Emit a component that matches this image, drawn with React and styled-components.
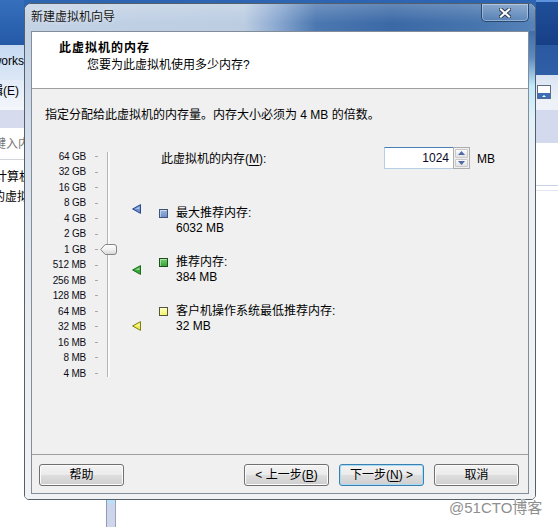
import React from 'react';
import styled, { createGlobalStyle } from 'styled-components';

const FONT = `"Liberation Sans", "Noto Sans CJK SC", sans-serif`;
const ROW = 15.47;

const GlobalStyle = createGlobalStyle`
  html, body { margin: 0; padding: 0; background: #ffffff; }
  body { font-family: ${FONT}; font-size: 12px; color: #000; }
  * { box-sizing: border-box; }
`;

const Desktop = styled.div`
  position: relative;
  width: 558px;
  height: 527px;
  overflow: hidden;
  display: grid;
  grid-template-columns: 24px 512px 22px;
  grid-template-rows: 500px 27px;
  background: #ffffff;
`;

/* ---------- background window, left side ---------- */
const LeftPane = styled.div`
  display: flex;
  flex-direction: column;
  overflow: hidden;
  background: #ffffff;
  white-space: nowrap;
`;
const AeroBand = styled.div`
  flex: none;
  height: 45px;
  background: ${p => (p.$dark ? 'linear-gradient(#1f4f99, #173f86)' : 'linear-gradient(#3670bd, #2459a6)')};
  border-top: ${p => (p.$dark ? '2px solid #5d92dc' : 'none')};
`;
const ToolBand = styled.div`
  flex: none;
  height: 35px;
  display: flex;
  align-items: center;
  justify-content: flex-end;
  padding-bottom: 4px;
  background: linear-gradient(#c5d9f1, #dce8f6);
`;
const MenuBand = styled.div`
  flex: none;
  height: 30px;
  display: flex;
  align-items: flex-start;
  justify-content: flex-end;
  padding: 3px 5px 0 0;
  line-height: 16px;
  background: linear-gradient(#e2ebf7, #f4f7fb);
`;
const NavBand = styled.div`
  flex: none;
  height: 18px;
  background: #d6dced;
`;
const SearchBand = styled.div`
  flex: none;
  height: 32px;
  padding-top: 8px;
  line-height: 16px;
  color: #777;
  border-bottom: 1px solid #d2d6dc;
  text-indent: -6px;
`;
const TreeArea = styled.div`
  flex: 1;
  padding-top: 7px;
`;
const TreeItem = styled.div`
  line-height: 20px;
  text-indent: ${p => p.$indent}px;
`;

/* ---------- background window, right side ---------- */
const RightPane = styled.div`
  display: flex;
  flex-direction: column;
  overflow: hidden;
  background: #ffffff;
`;
const RibbonBand = styled.div`
  flex: none;
  height: 30px;
  background: linear-gradient(#2a58a1, #2f5fa7);
`;
const PanelBand = styled.div`
  flex: none;
  height: 25px;
  padding: 10px 0 0 1px;
  background: linear-gradient(#d9e4f1, #ecf1f8);
`;
const PaleBand = styled.div`
  flex: none;
  height: 10px;
  background: #eef2f8;
`;
const LavenderBand = styled.div`
  flex: none;
  height: 33px;
  background: #d4daed;
`;
const ListLine = styled.div`
  flex: none;
  margin-top: ${p => p.$gap}px;
  border-top: 1px solid ${p => p.$c};
`;

/* ---------- stage + bottom ---------- */
const Stage = styled.div`
  display: flex;
  flex-direction: column;
  background: linear-gradient(to bottom, #2d65b2 0, #2a60ab 45px, #ffffff 45px);
`;
const BottomRow = styled.div`
  grid-column: 1 / -1;
  display: flex;
  padding-left: 106px;
  background: #ffffff;
`;
const ScrollRail = styled.div`
  width: 10px;
  height: 100%;
  border-left: 1px solid #8e9ab6;
  border-right: 1px solid #9aa4bd;
  background: linear-gradient(to bottom, #b6e3f8 0, #ccd5ea 6px, #d0d6ea 100%);
`;
const Watermark = styled.div`
  position: absolute;
  left: 449px;
  top: 499px;
  font-size: 15px;
  line-height: 18px;
  color: #8f8f8f;
  text-shadow: 1px 0 0 #fff, -1px 0 0 #fff, 0 1px 0 #fff, 0 -1px 0 #fff;
  white-space: nowrap;
`;

/* ---------- dialog frame ---------- */
const Dialog = styled.div`
  margin-top: 3px;
  height: 497px;
  border: 1px solid #56606c;
  border-radius: 7px 7px 5px 5px;
  overflow: hidden;
  display: flex;
  flex-direction: column;
  background: #f1f2f4;
`;
const TitleBar = styled.div`
  flex: none;
  height: 27px;
  display: flex;
  align-items: flex-start;
  padding-left: 6px;
  background:
    linear-gradient(to bottom, rgba(255, 255, 255, 0.2), rgba(255, 255, 255, 0) 70%),
    linear-gradient(to right, #c3d2e5 0%, #bccde2 43%, #8eabd2 49%, #4c78b1 57%, #3b69a6 72%, #4674ad 88%, #5683b9 100%);
`;
const TitleText = styled.span`
  margin-top: 5px;
  line-height: 16px;
  color: #151515;
  text-shadow: 0 0 5px rgba(255, 255, 255, 0.7);
`;
const CloseButton = styled.div`
  margin-left: auto;
  margin-right: 6px;
  width: 48px;
  height: 18px;
  border: 1px solid #2b4870;
  border-top: none;
  border-radius: 0 0 5px 5px;
  box-shadow: inset 0 0 0 1px rgba(255, 255, 255, 0.35);
  background: linear-gradient(to bottom, rgba(255, 255, 255, 0.18), rgba(255, 255, 255, 0.04));
  display: flex;
  align-items: center;
  justify-content: center;
`;
const FrameMiddle = styled.div`
  flex: 1;
  display: flex;
  min-height: 0;
`;
const LeftEdge = styled.div`
  flex: none;
  width: 6px;
  background: linear-gradient(to bottom, #c2d1e4 0%, #d7e0ec 25%, #e8ecf1 60%, #f1f2f4 100%);
`;
const RightEdge = styled.div`
  flex: none;
  width: 6px;
  background: linear-gradient(to bottom, #3f6eab 0px, #5c8ac1 26px, #c3eafb 55px, #e3f1f8 90px, #eef0f3 160px, #f1f2f4 100%);
`;
const BottomEdge = styled.div`
  flex: none;
  height: 5px;
  background: #f1f2f4;
`;

/* ---------- client ---------- */
const Client = styled.div`
  flex: 1;
  display: flex;
  flex-direction: column;
  border: 1px solid #838d9a;
  background: #f0f0f0;
`;
const Header = styled.div`
  flex: none;
  height: 57px;
  background: #ffffff;
  border-bottom: 1px solid #a0a0a0;
  padding-top: 8px;
`;
const HeaderTitle = styled.div`
  padding-left: 27px;
  line-height: 16px;
  font-weight: bold;
  letter-spacing: 1px;
`;
const HeaderSubtitle = styled.div`
  margin-top: 1px;
  padding-left: 55px;
  line-height: 16px;
`;
const Body = styled.div`
  flex: 1;
  padding: 18px 0 0 13px;
`;
const Instruction = styled.div`
  line-height: 16px;
`;
const ContentRow = styled.div`
  display: flex;
  align-items: flex-start;
  margin-top: 26px;
`;

/* scale */
const LabelCol = styled.div`
  width: 41px;
  display: flex;
  flex-direction: column;
`;
const ScaleLabel = styled.div`
  height: ${ROW}px;
  line-height: ${ROW}px;
  text-align: right;
  font-size: 10px;
  letter-spacing: -0.2px;
  white-space: nowrap;
  color: #0c0c18;
`;
const TickCol = styled.div`
  margin-left: 9px;
  display: flex;
  flex-direction: column;
`;
const TickCell = styled.div`
  height: ${ROW}px;
  display: flex;
  align-items: center;
`;
const Tick = styled.div`
  width: 3px;
  height: 1px;
  background: #a8a8a8;
`;
const Track = styled.div`
  position: relative;
  margin: 3px 0 0 9px;
  width: 3px;
  height: 225px;
  background: linear-gradient(to right, #b6b6b6 0 1px, #fbfbfb 1px 3px);
`;
const Thumb = styled.svg`
  position: absolute;
  left: -7px;
  width: 17px;
  height: 11px;
`;

/* markers */
const MarkerCol = styled.div`
  position: relative;
  margin-left: 22px;
  width: 9px;
  height: ${ROW * 15}px;
`;
const Marker = styled.svg`
  position: absolute;
  left: 0;
  width: 9px;
  height: 10px;
`;

/* right column */
const InfoCol = styled.div`
  margin-left: 18px;
  display: flex;
  flex-direction: column;
`;
const MemoryRow = styled.div`
  margin-top: -2px;
  height: 22px;
  display: flex;
  align-items: center;
`;
const MemoryLabel = styled.div`
  width: 225px;
  padding-left: 2px;
  padding-top: 2px;
  line-height: 16px;
`;
const U = styled.span`
  text-decoration: underline;
  text-underline-offset: 2px;
`;
const SpinBox = styled.div`
  width: 86px;
  height: 22px;
  display: flex;
`;
const SpinField = styled.div`
  flex: 1;
  border: 1px solid #b6cfe6;
  border-top-color: #4a7fb3;
  border-right: none;
  background: #ffffff;
  text-align: right;
  padding-right: 4px;
  line-height: 20px;
  color: #0a0a28;
`;
const SpinButtons = styled.div`
  width: 17px;
  border: 1px solid #adadad;
  background: #f0f0f0;
  display: flex;
  flex-direction: column;
  gap: 1px;
  padding: 1px;
`;
const SpinHalf = styled.div`
  flex: 1;
  border: 1px solid #c9c9c9;
  border-radius: 1px;
  background: linear-gradient(#fafafa, #e2e2e2);
  display: flex;
  align-items: center;
  justify-content: center;
`;
const UnitText = styled.div`
  margin-left: 7px;
  padding-top: 2px;
  line-height: 16px;
`;
const Legend = styled.div`
  margin-top: 37px;
  display: flex;
  flex-direction: column;
  gap: 19px;
`;
const LegendItem = styled.div`
  display: flex;
  align-items: flex-start;
`;
const Swatch = styled.div`
  flex: none;
  margin-top: 3px;
  width: 9px;
  height: 9px;
  border: 1px solid ${p => p.$border};
  background: ${p => p.$fill};
  box-shadow: inset 1px 1px 0 rgba(255, 255, 255, 0.45);
`;
const LegendText = styled.div`
  margin-left: 8px;
  line-height: 15px;
`;

/* footer */
const Footer = styled.div`
  flex: none;
  height: 39px;
  border-top: 1px solid #a0a0a0;
  display: flex;
  gap: 10px;
  padding: 9px 9px 0 7px;
`;
const Button = styled.div`
  width: 85px;
  height: 22px;
  margin-left: ${p => (p.$push ? 'auto' : '0')};
  border: 1px solid ${p => (p.$focus ? '#3c7fb1' : '#707070')};
  border-radius: 3px;
  box-shadow: inset 0 0 0 1px ${p => (p.$focus ? '#a6dcf6' : '#fbfbfb')};
  background: linear-gradient(#f3f3f3 0%, #ebebeb 48%, #dddddd 52%, #cfcfcf 100%);
  display: flex;
  align-items: center;
  justify-content: center;
  line-height: 16px;
  white-space: nowrap;
`;

const SCALE = ['64 GB', '32 GB', '16 GB', '8 GB', '4 GB', '2 GB', '1 GB', '512 MB', '256 MB', '128 MB', '64 MB', '32 MB', '16 MB', '8 MB', '4 MB'];

const idxOf = mb => Math.log2(65536 / mb);

const MARKERS = [
  { mb: 6032, fill: '#6d8fce', light: '#b9cdf0', stroke: '#2c4b8c' },
  { mb: 384, fill: '#3aa83a', light: '#a6e6a0', stroke: '#1d6b1d' },
  { mb: 32, fill: '#ecec4a', light: '#ffffc0', stroke: '#7f7f18' },
];

const LEGEND = [
  { title: '最大推荐内存:', value: '6032 MB', fill: 'linear-gradient(#9db6e0, #6f8fca)', border: '#3f5578' },
  { title: '推荐内存:', value: '384 MB', fill: 'linear-gradient(#6fd06a, #37a637)', border: '#1f4f1f' },
  { title: '客户机操作系统最低推荐内存:', value: '32 MB', fill: 'linear-gradient(#ffffb0, #f4f46a)', border: '#55553a' },
];

const CloseGlyph = () => (
  <svg width="12" height="10" viewBox="0 0 12 10">
    <path d="M2 1.5 L10 8.5 M10 1.5 L2 8.5" stroke="#2a3a55" strokeWidth="4" strokeLinecap="square" />
    <path d="M2 1.5 L10 8.5 M10 1.5 L2 8.5" stroke="#ffffff" strokeWidth="2.2" strokeLinecap="square" />
  </svg>
);

const CollapseGlyph = () => (
  <svg width="14" height="14" viewBox="0 0 14 14">
    <rect x="0.5" y="0.5" width="13" height="13" fill="#ffffff" stroke="#5f6d82" />
    <rect x="1" y="8" width="12" height="5.5" fill="#3d6db4" />
    <path d="M5 12 L7 10 L9 12 Z" fill="#ffffff" />
  </svg>
);

const SpinArrow = ({ up }) => (
  <svg width="7" height="4" viewBox="0 0 7 4">
    <path d={up ? 'M0 4 L3.5 0 L7 4 Z' : 'M0 0 L3.5 4 L7 0 Z'} fill="#4f6aa6" />
  </svg>
);

export default function App() {
  const thumbTop = (6 + 0.5) * ROW - 3 - 5.5;
  return (
    <>
      <GlobalStyle />
      <Desktop>
        <LeftPane>
          <AeroBand />
          <ToolBand>Networks</ToolBand>
          <MenuBand>编辑(E)</MenuBand>
          <NavBand />
          <SearchBand>键入内容进行搜索</SearchBand>
          <TreeArea>
            <TreeItem $indent={-5}>计算机</TreeItem>
            <TreeItem $indent={-7}>的虚拟机</TreeItem>
          </TreeArea>
        </LeftPane>

        <Stage>
          <Dialog>
            <TitleBar>
              <TitleText>新建虚拟机向导</TitleText>
              <CloseButton>
                <CloseGlyph />
              </CloseButton>
            </TitleBar>
            <FrameMiddle>
              <LeftEdge />
              <Client>
                <Header>
                  <HeaderTitle>此虚拟机的内存</HeaderTitle>
                  <HeaderSubtitle>您要为此虚拟机使用多少内存?</HeaderSubtitle>
                </Header>
                <Body>
                  <Instruction>指定分配给此虚拟机的内存量。内存大小必须为 4 MB 的倍数。</Instruction>
                  <ContentRow>
                    <LabelCol>
                      {SCALE.map(s => (
                        <ScaleLabel key={s}>{s}</ScaleLabel>
                      ))}
                    </LabelCol>
                    <TickCol>
                      {SCALE.map(s => (
                        <TickCell key={s}>
                          <Tick />
                        </TickCell>
                      ))}
                    </TickCol>
                    <Track>
                      <Thumb viewBox="0 0 17 11" style={{ top: `${thumbTop}px` }}>
                        <defs>
                          <linearGradient id="thumbFill" x1="0" y1="0" x2="0" y2="1">
                            <stop offset="0" stopColor="#ffffff" />
                            <stop offset="0.5" stopColor="#f1f1f1" />
                            <stop offset="1" stopColor="#d6d6d6" />
                          </linearGradient>
                        </defs>
                        <path
                          d="M0.6 5.5 L5.2 0.5 L14 0.5 Q16.5 0.5 16.5 3 L16.5 8 Q16.5 10.5 14 10.5 L5.2 10.5 Z"
                          fill="url(#thumbFill)"
                          stroke="#858585"
                          strokeWidth="1"
                        />
                      </Thumb>
                    </Track>
                    <MarkerCol>
                      {MARKERS.map(m => (
                        <Marker
                          key={m.mb}
                          viewBox="0 0 9 10"
                          style={{ top: `${(idxOf(m.mb) + 0.5) * ROW - 6}px` }}
                        >
                          <polygon points="0.6,5 8.5,0.6 8.5,9.4" fill={m.fill} stroke={m.stroke} strokeWidth="1" strokeLinejoin="round" />
                          <polygon points="3,5 7.5,2.4 7.5,5" fill={m.light} opacity="0.8" />
                        </Marker>
                      ))}
                    </MarkerCol>
                    <InfoCol>
                      <MemoryRow>
                        <MemoryLabel>
                          此虚拟机的内存(<U>M</U>):
                        </MemoryLabel>
                        <SpinBox>
                          <SpinField>1024</SpinField>
                          <SpinButtons>
                            <SpinHalf>
                              <SpinArrow up />
                            </SpinHalf>
                            <SpinHalf>
                              <SpinArrow />
                            </SpinHalf>
                          </SpinButtons>
                        </SpinBox>
                        <UnitText>MB</UnitText>
                      </MemoryRow>
                      <Legend>
                        {LEGEND.map(l => (
                          <LegendItem key={l.title}>
                            <Swatch $fill={l.fill} $border={l.border} />
                            <LegendText>
                              <div>{l.title}</div>
                              <div>{l.value}</div>
                            </LegendText>
                          </LegendItem>
                        ))}
                      </Legend>
                    </InfoCol>
                  </ContentRow>
                </Body>
                <Footer>
                  <Button>帮助</Button>
                  <Button $push>
                    &lt; 上一步(<U>B</U>)
                  </Button>
                  <Button $focus>
                    下一步(<U>N</U>) &gt;
                  </Button>
                  <Button>取消</Button>
                </Footer>
              </Client>
              <RightEdge />
            </FrameMiddle>
            <BottomEdge />
          </Dialog>
        </Stage>

        <RightPane>
          <AeroBand $dark />
          <RibbonBand />
          <PanelBand>
            <CollapseGlyph />
          </PanelBand>
          <PaleBand />
          <LavenderBand />
          <ListLine $gap={42} $c="#c6d3e8" />
          <ListLine $gap={4} $c="#e0e6f0" />
        </RightPane>

        <BottomRow>
          <ScrollRail />
        </BottomRow>
        <Watermark>@51CTO博客</Watermark>
      </Desktop>
    </>
  );
}
